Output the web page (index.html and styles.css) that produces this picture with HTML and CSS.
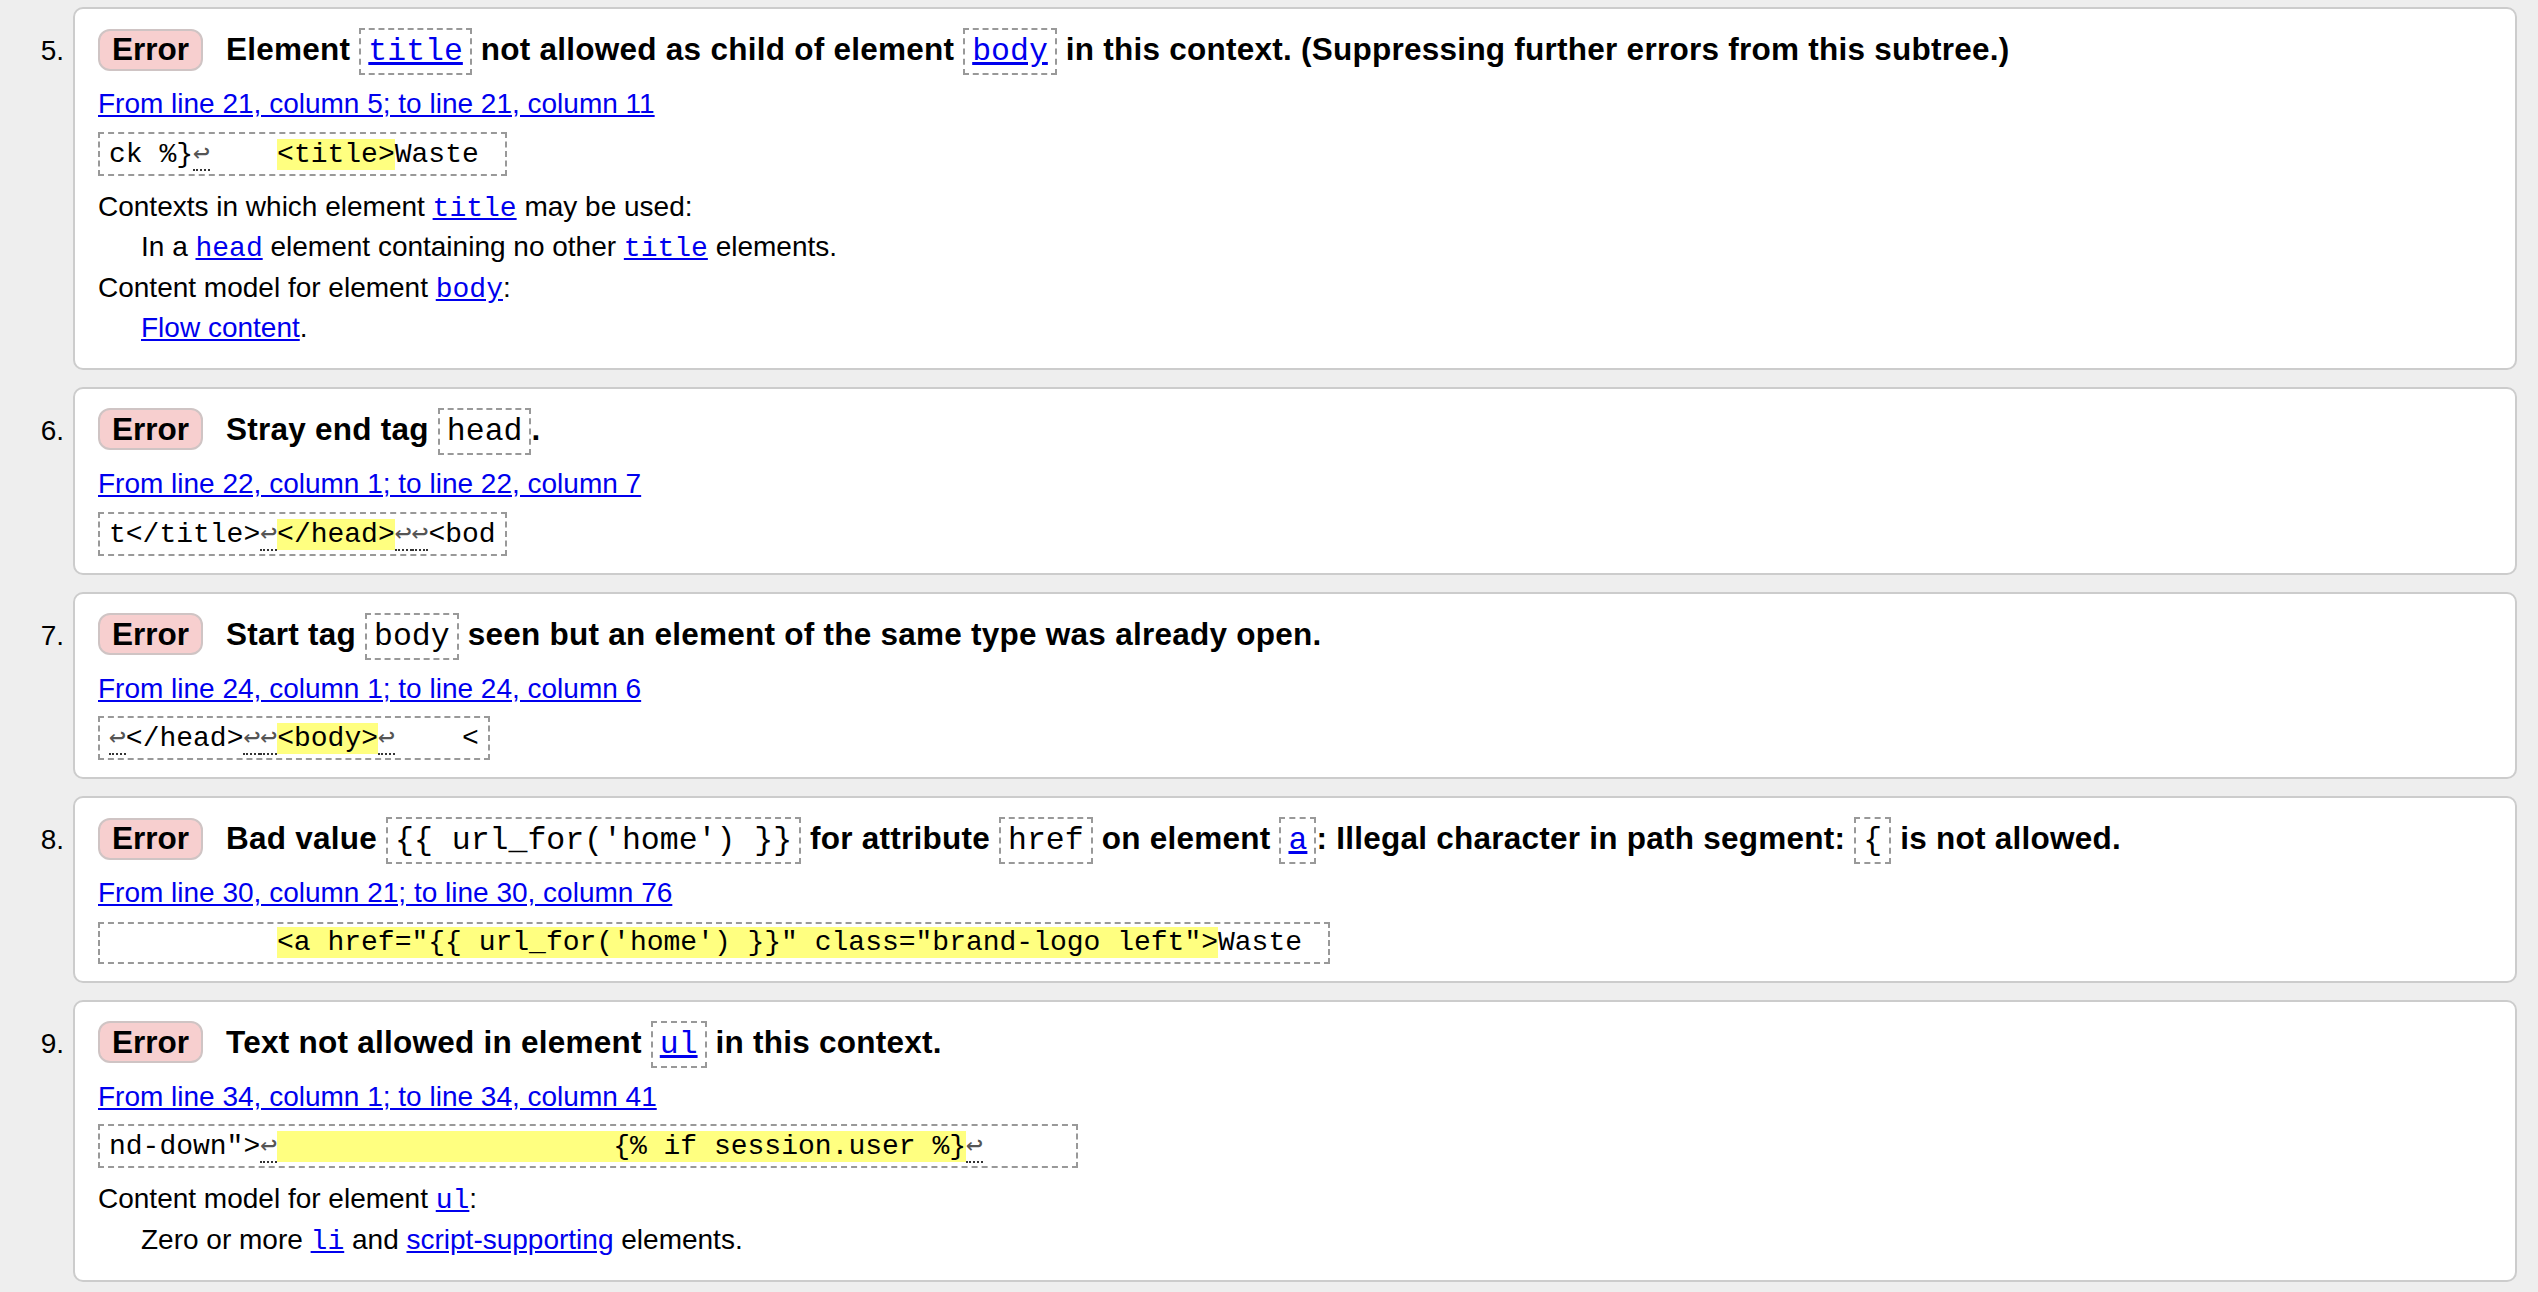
FILE: index.html
```html
<!DOCTYPE html>
<html lang="en">
<head>
<meta charset="utf-8">
<title>Nu Html Checker – messages</title>
<link rel="stylesheet" href="styles.css">
</head>
<body>
<ol class="messages">
  <li class="msg">
    <span class="num">5.</span>
    <div class="card">
      <p class="head"><strong class="badge">Error</strong><span class="text">Element <code class="box"><a href="#">title</a></code> not allowed as child of element <code class="box"><a href="#">body</a></code> in this context. (Suppressing further errors from this subtree.)</span></p>
      <p class="loc"><a href="#">From line 21, column 5; to line 21, column 11</a></p>
      <p class="extract"><code>ck %}<span class="lf">↩</span>    <b>&lt;title&gt;</b>Waste </code></p>
      <dl class="details">
        <dt>Contexts in which element <a href="#"><code>title</code></a> may be used:</dt>
        <dd>In a <a href="#"><code>head</code></a> element containing no other <a href="#"><code>title</code></a> elements.</dd>
        <dt>Content model for element <a href="#"><code>body</code></a>:</dt>
        <dd><a href="#">Flow content</a>.</dd>
      </dl>
    </div>
  </li>
  <li class="msg">
    <span class="num">6.</span>
    <div class="card">
      <p class="head"><strong class="badge">Error</strong><span class="text">Stray end tag <code class="box">head</code>.</span></p>
      <p class="loc"><a href="#">From line 22, column 1; to line 22, column 7</a></p>
      <p class="extract"><code>t&lt;/title&gt;<span class="lf">↩</span><b>&lt;/head&gt;</b><span class="lf">↩</span><span class="lf">↩</span>&lt;bod</code></p>
    </div>
  </li>
  <li class="msg">
    <span class="num">7.</span>
    <div class="card">
      <p class="head"><strong class="badge">Error</strong><span class="text">Start tag <code class="box">body</code> seen but an element of the same type was already open.</span></p>
      <p class="loc"><a href="#">From line 24, column 1; to line 24, column 6</a></p>
      <p class="extract"><code><span class="lf">↩</span>&lt;/head&gt;<span class="lf">↩</span><span class="lf">↩</span><b>&lt;body&gt;</b><span class="lf">↩</span>    &lt;</code></p>
    </div>
  </li>
  <li class="msg">
    <span class="num">8.</span>
    <div class="card">
      <p class="head"><strong class="badge">Error</strong><span class="text">Bad value <code class="box">{{ url_for('home') }}</code> for attribute <code class="box">href</code> on element <code class="box"><a href="#">a</a></code>: Illegal character in path segment: <code class="box">{</code> is not allowed.</span></p>
      <p class="loc"><a href="#">From line 30, column 21; to line 30, column 76</a></p>
      <p class="extract"><code>          <b>&lt;a href="{{ url_for('home') }}" class="brand-logo left"&gt;</b>Waste </code></p>
    </div>
  </li>
  <li class="msg">
    <span class="num">9.</span>
    <div class="card">
      <p class="head"><strong class="badge">Error</strong><span class="text">Text not allowed in element <code class="box"><a href="#">ul</a></code> in this context.</span></p>
      <p class="loc"><a href="#">From line 34, column 1; to line 34, column 41</a></p>
      <p class="extract"><code>nd-down"&gt;<span class="lf">↩</span><b>                    {% if session.user %}</b><span class="lf">↩</span>     </code></p>
      <dl class="details">
        <dt>Content model for element <a href="#"><code>ul</code></a>:</dt>
        <dd>Zero or more <a href="#"><code>li</code></a> and <a href="#">script-supporting</a> elements.</dd>
      </dl>
    </div>
  </li>
</ol>
</body>
</html>
```

FILE: styles.css
```css
html, body {
  margin: 0;
  padding: 0;
}

body {
  background: #eeeeee;
  color: #000;
  font-family: "Liberation Sans", Arial, Helvetica, sans-serif;
  font-size: 28px;
  line-height: 1.45;
}

a {
  color: #0000ee;
  text-decoration: underline;
}

code {
  font-family: "Liberation Mono", "Courier New", monospace;
  font-size: 1em;
}

.messages {
  list-style: none;
  margin: 0;
  padding: 7px 21px 0 0;
}

.msg {
  display: grid;
  grid-template-columns: 64px 1fr;
  column-gap: 9px;
  align-items: baseline;
  margin-bottom: 17px;
}

.num {
  text-align: right;
  font-size: 28px;
}

.card {
  background: #fff;
  border: 2px solid #cccccc;
  border-radius: 10px;
  padding: 16px 23px 17px 23px;
  min-width: 0;
}

.head {
  margin: 0;
  font-size: 31.5px;
  font-weight: bold;
  line-height: 48px;
  letter-spacing: 0.25px;
}

.badge {
  display: inline-block;
  background: #f7cfcf;
  border: 2px solid #cfc4c4;
  border-radius: 12px;
  padding: 0.5px 12px;
  line-height: normal;
  margin-right: 23px;
  letter-spacing: 0;
}

.box {
  border: 2px dashed #999999;
  padding: 4px 7px;
  font-weight: normal;
  letter-spacing: 0;
  line-height: 1;
}

.loc {
  margin: 11px 0 0;
}

.extract {
  margin: 7px 0 0;
}

.extract code {
  display: inline-block;
  white-space: pre;
  border: 2px dashed #999999;
  padding: 3px 9px;
  line-height: 32px;
}

.extract b {
  font-weight: normal;
  background: #ffff80;
}

.lf {
  font-family: "DejaVu Sans Mono", "Liberation Mono", monospace;
  color: #555;
  border-bottom: 2px dotted #333;
}

.details {
  margin: 11px 0 2px;
}

.details code {
  line-height: 1;
}

.details dt {
  margin: 0;
}

.details dd {
  margin: 0 0 0 43px;
}
```
